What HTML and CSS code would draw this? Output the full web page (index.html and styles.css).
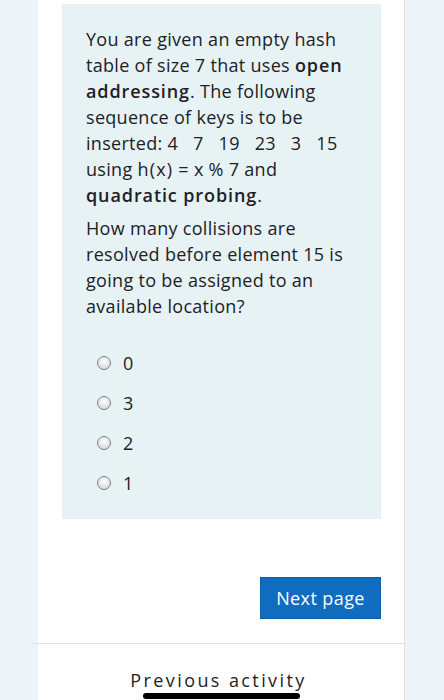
FILE: index.html
```html
<!DOCTYPE html>
<html lang="en">
<head>
<meta charset="utf-8">
<title>Question</title>
<link rel="stylesheet" href="styles.css">
</head>
<body>
<div class="page">
  <main class="card">
    <section class="formulation">
      <p class="qtext">You are given an empty hash table of size 7 that uses <span class="term">open addressing</span>. The following sequence of keys is to be inserted: 4&nbsp;&nbsp;&nbsp;7&nbsp;&nbsp;&nbsp;19&nbsp;&nbsp;&nbsp;23&nbsp;&nbsp;&nbsp;3&nbsp;&nbsp;&nbsp;15 using <span class="fn">h(x)</span> = x % 7 and <span class="term">quadratic probing</span>.</p>
      <p class="qtext">How many collisions are resolved before element 15 is going to be assigned to an available location?</p>
      <div class="answers">
        <label class="option"><span class="radio"></span><span class="opt-label">0</span></label>
        <label class="option"><span class="radio"></span><span class="opt-label">3</span></label>
        <label class="option"><span class="radio"></span><span class="opt-label">2</span></label>
        <label class="option"><span class="radio"></span><span class="opt-label">1</span></label>
      </div>
    </section>
    <div class="actions">
      <button class="btn-primary" type="button">Next page</button>
    </div>
    <div class="nav">
      <a class="prev" href="#">Previous activity</a>
    </div>
  </main>
  <div class="home-indicator"></div>
</div>
</body>
</html>
```

FILE: styles.css
```css
html, body {
  margin: 0;
  padding: 0;
}
body {
  background: #edf3f7;
  font-family: "Open Sans", "Noto Sans", sans-serif;
  color: #1d2125;
  width: 444px;
  height: 700px;
  overflow: hidden;
}
.page {
  position: relative;
  height: 700px;
}
.card {
  margin-left: 38px;
  width: 366px;
  height: 700px;
  background: #ffffff;
  border-right: 1px solid #dfe3e7;
  box-sizing: content-box;
  padding-top: 4px;
}
.formulation {
  margin: 0 23px 0 24px;
  background: #e7f2f5;
  padding: 22px 16px 17px 24px;
  height: 476px;
}
.qtext {
  margin: 0 0 7px 0;
  font-size: 18px;
  line-height: 26px;
  letter-spacing: 0.3px;
  width: 272px;
}
.term {
  font-weight: 600;
  letter-spacing: 0.9px;
}
.fn {
  letter-spacing: 1.2px;
}
.answers {
  display: flex;
  flex-direction: column;
  gap: 14px;
  padding-top: 24px;
}
.option {
  display: flex;
  align-items: center;
  height: 26px;
  font-size: 18px;
  padding-left: 11px;
}
.radio {
  width: 12px;
  height: 12px;
  border-radius: 50%;
  border: 1px solid #7a7f85;
  background: radial-gradient(circle at 50% 35%, #fdfdfd 0%, #d9dadc 80%);
  margin-right: 12px;
}
.opt-label {
  line-height: 26px;
}
.actions {
  display: flex;
  justify-content: flex-end;
  padding: 58px 23px 24px 0;
}
.btn-primary {
  width: 121px;
  height: 42px;
  background: #0f6cbf;
  color: #ffffff;
  border: 1px solid #0c5ea8;
  border-radius: 0;
  font-family: "Open Sans", "Noto Sans", sans-serif;
  font-size: 18px;
  letter-spacing: 0.4px;
  padding: 0;
}
.nav {
  border-top: 1px solid #dfe3e7;
  margin-left: -5px;
  display: flex;
  justify-content: center;
  padding-top: 23px;
}
.prev {
  color: #1d2125;
  text-decoration: none;
  font-size: 18px;
  letter-spacing: 2.4px;
  line-height: 26px;
}
.home-indicator {
  position: absolute;
  left: 143px;
  top: 693px;
  width: 157px;
  height: 6px;
  border-radius: 3px;
  background: #000;
}
```
